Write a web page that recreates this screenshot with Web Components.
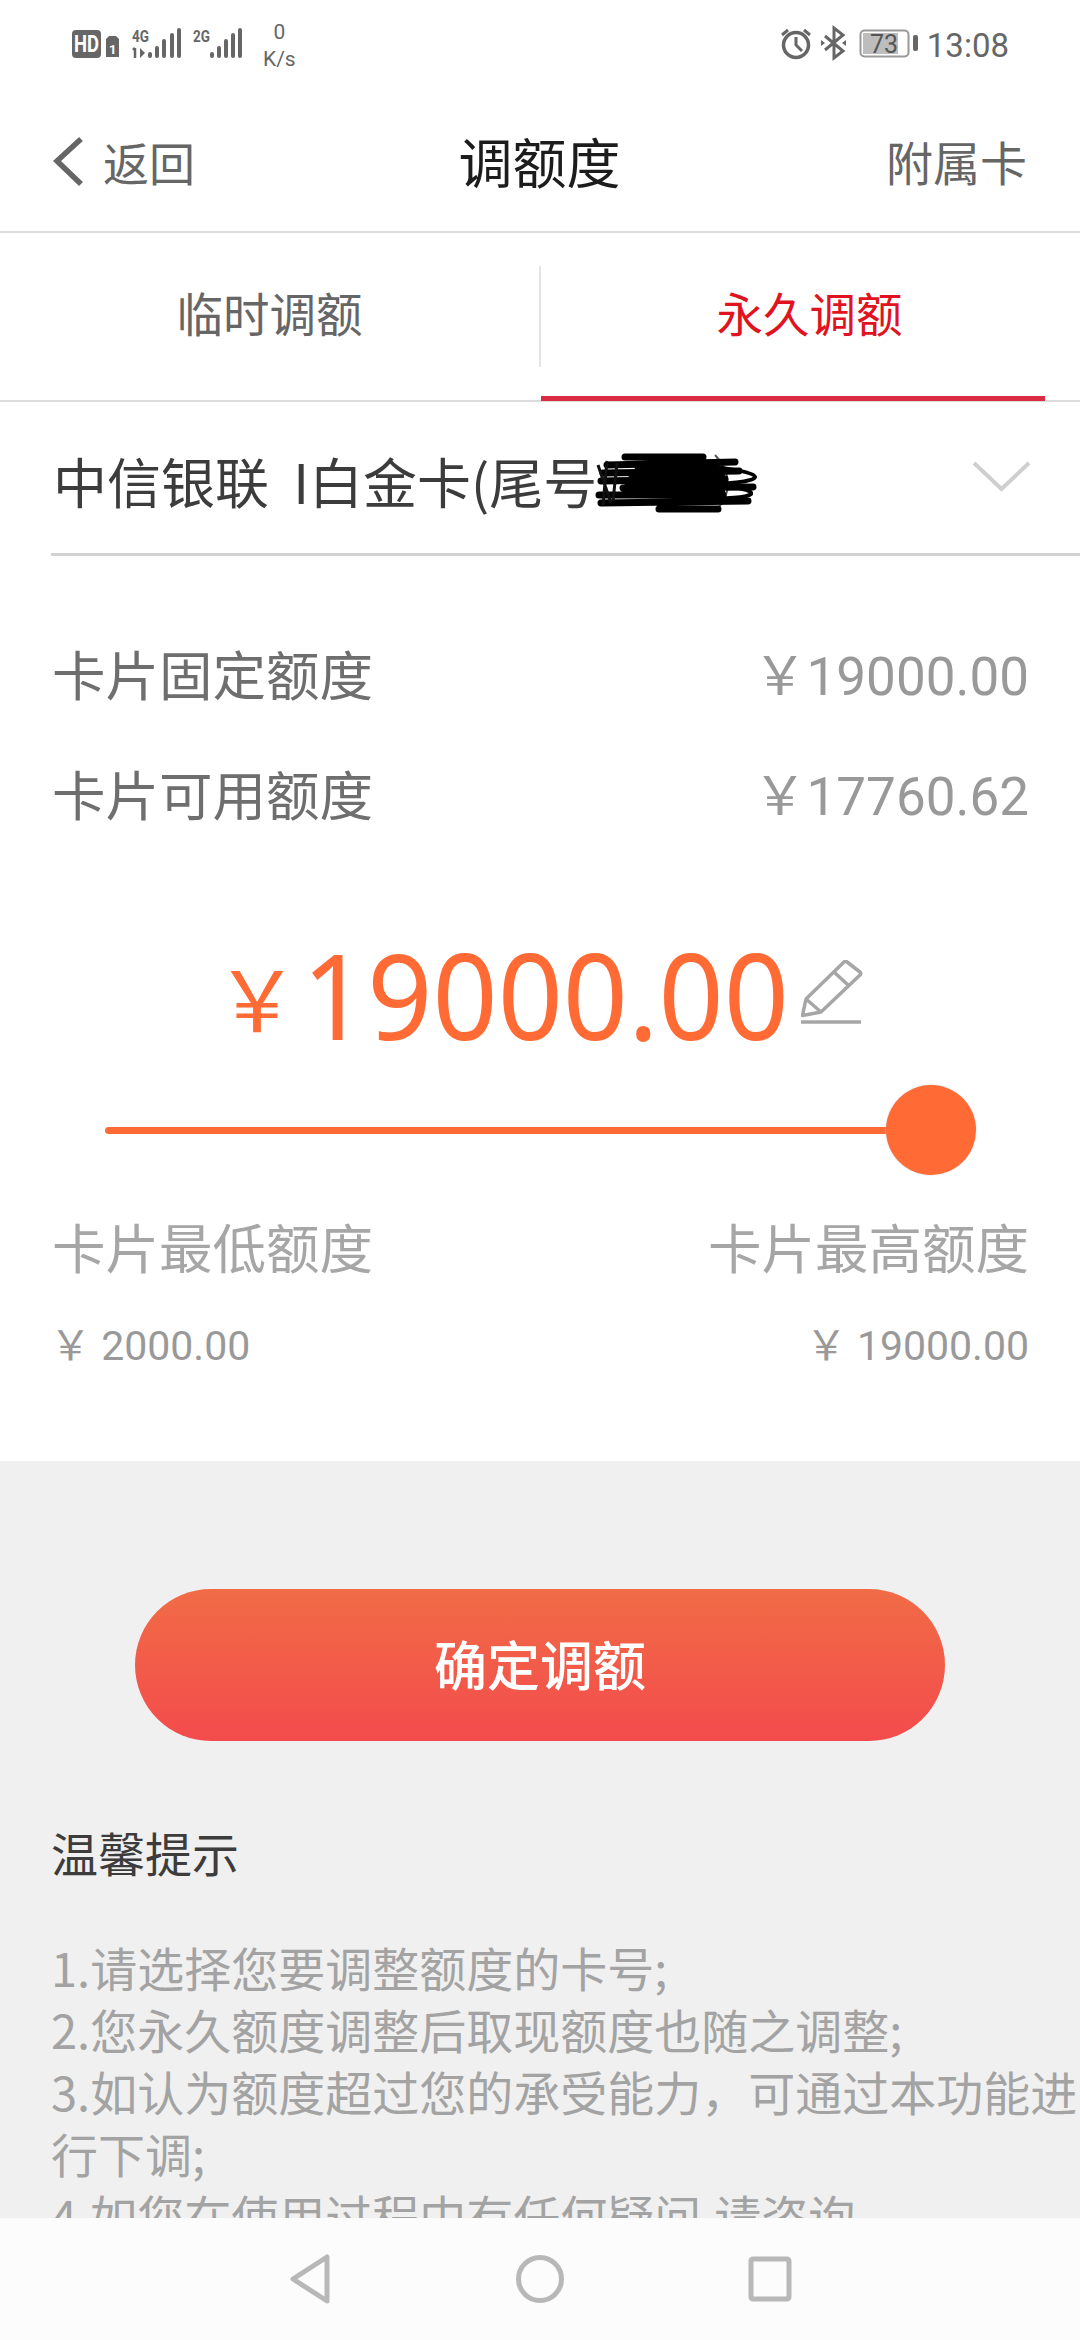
<!DOCTYPE html>
<html lang="zh">
<head>
<meta charset="utf-8">
<style>
  html, body { margin: 0; padding: 0; }
  body {
    width: 1080px; height: 2340px; overflow: hidden; background: #fff;
    font-family: "Noto Sans CJK SC", Roboto, sans-serif;
    display: flex; flex-direction: column;
  }
</style>
</head>
<body>
<status-bar></status-bar>
<nav-bar></nav-bar>
<tab-bar></tab-bar>
<card-select></card-select>
<info-row label="卡片固定额度" value="￥19000.00" style="margin-top:56px"></info-row>
<info-row label="卡片可用额度" value="￥17760.62"></info-row>
<amount-slider></amount-slider>
<limit-row></limit-row>
<tips-panel>
  <span slot="btn">确定调额</span>
</tips-panel>
<soft-keys></soft-keys>

<script>
class StatusBar extends HTMLElement {
  constructor() { super(); this.attachShadow({ mode: 'open' }); }
  connectedCallback() {
    this.shadowRoot.innerHTML = `
    <style>
      :host { display: flex; height: 88px; box-sizing: border-box; padding: 0 71px 0 70px; align-items: center; justify-content: space-between; color: #666; flex: none; }
      .l, .r { display: flex; align-items: center; }
      svg { display: block; }
      .speed { font: 21px/27px Roboto, sans-serif; text-align: center; margin: 4px 0 0 13px; color: #666; }
      .time { font: 33px Roboto, sans-serif; margin-left: 7px; margin-top: 3px; }
      .small { font: 700 16px Roboto, sans-serif; fill: #666; }
      .hd { font: 700 23px Roboto, sans-serif; fill: #fff; }
      .sim { font: 700 13px Roboto, sans-serif; fill: #fff; }
      .num { font: 25px Roboto, sans-serif; fill: #555; }
    </style>
    <div class="l">
      <svg width="180" height="40" viewBox="70 26 180 40">
        <rect x="72" y="32" width="29" height="28" rx="4" fill="#666"/>
        <text class="hd" x="74" y="54" textLength="25" lengthAdjust="spacingAndGlyphs">HD</text>
        <path d="M106 41l3-3h7l3 3v18h-13z" fill="#666"/>
        <text class="sim" x="109" y="56">1</text>
        <text class="small" x="132" y="44" textLength="17" lengthAdjust="spacingAndGlyphs">4G</text>
        <path d="M135 50v10M133 52l2-2" stroke="#666" stroke-width="2.5" fill="none"/>
        <path d="M140 50v10l5-5z" fill="#666"/>
        <g stroke="#666" stroke-width="4" stroke-linecap="round" fill="none">
          <path d="M150 56v2M157 50v8M164 43v15M172 37v21M179 32v26"/>
          <path d="M212 56v2M219 50v8M226 43v15M233 37v21M240 32v26"/>
        </g>
        <text class="small" x="193" y="44" textLength="17" lengthAdjust="spacingAndGlyphs">2G</text>
      </svg>
      <div class="speed">0<br>K/s</div>
    </div>
    <div class="r">
      <svg width="142" height="40" viewBox="777 26 142 40">
        <circle cx="795" cy="47" r="12.5" fill="none" stroke="#666" stroke-width="3.5"/>
        <path d="M795 39v8l6 6" fill="none" stroke="#666" stroke-width="3"/>
        <path d="M781 37l6-5M809 37l-6-5" stroke="#666" stroke-width="3"/>
        <path d="M824 38l18 15-9 7V30l9 7-18 15" fill="none" stroke="#666" stroke-width="3"/>
        <path d="M820 42v6l4-3zM845 42v6l-4-3z" fill="#666"/>
        <rect x="859.500" y="32.500" width="48" height="26" rx="4" fill="#fff" stroke="#999" stroke-width="2"/>
        <rect x="862" y="35" width="35" height="21" fill="#bdbdbd"/>
        <rect x="912" y="37" width="5" height="16" rx="2" fill="#666"/>
        <text class="num" x="869" y="55">73</text>
      </svg>
      <span class="time">13:08</span>
    </div>`;
  }
}
customElements.define('status-bar', StatusBar);

class NavBar extends HTMLElement {
  constructor() { super(); this.attachShadow({ mode: 'open' }); }
  connectedCallback() {
    this.shadowRoot.innerHTML = `
    <style>
      :host { display: grid; grid-template-columns: 1fr auto 1fr; flex: none; height: 145px; box-sizing: border-box; padding: 2px 53px 0 52px; align-items: center; border-bottom: 2px solid #dcdcdc; }
      .back { display: flex; align-items: center; font-size: 46px; color: #666; }
      svg { margin-right: 20px; }
      .title { font-size: 54px; color: #1c1c1c; }
      .more { font-size: 47px; color: #666; justify-self: end; }
    </style>
    <div class="back"><svg width="31" height="50" viewBox="0 0 31 50"><path d="M29 3L5 25l24 23" fill="none" stroke="#666" stroke-width="5.500"/></svg>返回</div>
    <div class="title">调额度</div>
    <div class="more">附属卡</div>`;
  }
}
customElements.define('nav-bar', NavBar);

class TabBar extends HTMLElement {
  constructor() { super(); this.attachShadow({ mode: 'open' }); }
  connectedCallback() {
    this.shadowRoot.innerHTML = `
    <style>
      :host { display: grid; flex: none; grid-template-columns: 539px 541px; height: 169px; box-sizing: border-box; border-bottom: 2px solid #dcdcdc; font-size: 46.500px; }
      .tab { display: flex; align-items: center; justify-content: center; color: #666; position: relative; padding-bottom: 11px; }
      .tab.on { color: #df1420; }
      .on::before { content: ""; position: absolute; left: 0; top: 33px; height: 101px; width: 2px; background: #e4e4e4; }
      .on::after { content: ""; position: absolute; left: 2px; width: 504px; bottom: -1px; height: 5px; background: #d92b42; }
    </style>
    <div class="tab">临时调额</div>
    <div class="tab on">永久调额</div>`;
  }
}
customElements.define('tab-bar', TabBar);

class CardSelect extends HTMLElement {
  constructor() { super(); this.attachShadow({ mode: 'open' }); }
  connectedCallback() {
    this.shadowRoot.innerHTML = `
    <style>
      :host { display: flex; flex: none; height: 154px; margin-left: 51px; box-sizing: border-box; border-bottom: 3px solid #d2d2d2; align-items: center; font-size: 54px; color: #3c3c3c; padding: 6px 49px 0 2px; position: relative; }
      .name { white-space: pre; flex: 1; }
      .scrib { position: absolute; left: 542px; top: 49px; }
      .arrow { display: block; margin-top: -10px; }
    </style>
    <span class="name">中信银联  I白金卡(尾号</span>
    <svg class="scrib" width="166" height="62" viewBox="0 0 166 62">
      <path d="M122 4c16 16 18 40 0 56" fill="none" stroke="#555" stroke-width="2"/>
      <path d="M32 6H110M14 14L142 11M10 22L146 20M8 30L132 28M30 37L160 36M6 44L130 44M8 52L155 50M66 58H125" fill="none" stroke="#000" stroke-width="7" stroke-linecap="round"/>
      <path d="M46 16H122M40 26H128M36 34H126M34 42H128" fill="none" stroke="#000" stroke-width="9" stroke-linecap="round"/>
      <path d="M5 14L18 52M14 10L10 54M24 12L20 50" fill="none" stroke="#111" stroke-width="3"/>
      <path d="M100 14c36 3 62 7 62 12s-30 7-60 8c36 1 58 4 56 9-4 4-30 5-56 5" fill="none" stroke="#000" stroke-width="4"/>
    </svg>
    <svg class="arrow" width="59" height="32" viewBox="0 0 59 32"><path d="M2 3l27.500 26L57 3" fill="none" stroke="#cfcfcf" stroke-width="4"/></svg>`;
  }
}
customElements.define('card-select', CardSelect);

class InfoRow extends HTMLElement {
  constructor() { super(); this.attachShadow({ mode: 'open' }); }
  connectedCallback() {
    this.shadowRoot.innerHTML = `
    <style>
      :host { display: flex; flex: none; height: 120px; padding: 0 51px 0 52px; align-items: center; justify-content: space-between; font-size: 53.500px; color: #6e6e6e; }
      .v { color: #999; font: 53px Roboto, "Noto Sans CJK SC", sans-serif; }
    </style>
    <span>${this.getAttribute('label')}</span><span class="v">${this.getAttribute('value')}</span>`;
  }
}
customElements.define('info-row', InfoRow);

class AmountSlider extends HTMLElement {
  constructor() { super(); this.attachShadow({ mode: 'open' }); }
  connectedCallback() {
    this.shadowRoot.innerHTML = `
    <style>
      :host { display: block; flex: none; height: 216px; margin-top: 66px; }
      .amt { display: flex; align-items: center; height: 152px; color: #ff6a35; font: 114px/150px "Noto Sans", sans-serif; padding-left: 215px; }
      .cur { font: 84px/150px "Noto Sans CJK SC", sans-serif; margin: 4px 3px 0 0; }
      .num { display: inline-block; transform: scaleY(1.05); }
      .pen { margin: -2px 0 0 12px; display: block; }
      .track { height: 7px; background: #ff6a35; margin: 57px 0 0 105px; width: 790px; border-radius: 4px; position: relative; }
      .thumb { position: absolute; left: 781px; top: -42px; width: 90px; height: 90px; border-radius: 50%; background: #ff6a35; box-shadow: 0 0 2px #ccc; }
    </style>
    <div class="amt"><span class="cur">￥</span><span class="num">19000.00</span>
      <svg class="pen" width="62" height="66" viewBox="0 0 62 66">
        <path d="M0 62h60" stroke="#a6a6a6" stroke-width="3.500"/>
        <path d="M1.500 55.500L5 39 43 2c1-1 2-1 3 0l13 10c1 1 1 2 0 3L20 52zM5 39l15 13M33 12l14 13" fill="none" stroke="#a6a6a6" stroke-width="3.500" stroke-linejoin="round"/>
      </svg>
    </div>
    <div class="track"><div class="thumb"></div></div>`;
  }
}
customElements.define('amount-slider', AmountSlider);

class LimitRow extends HTMLElement {
  constructor() { super(); this.attachShadow({ mode: 'open' }); }
  connectedCallback() {
    this.shadowRoot.innerHTML = `
    <style>
      :host { display: grid; flex: none; grid-template-columns: 1fr 1fr; height: 327px; box-sizing: border-box; padding: 73px 51px 0 52px; font-size: 53.500px; color: #a6a6a6; align-content: start; row-gap: 32px; }
      .r { text-align: right; }
      .n { font: 41px/60px Roboto, "Noto Sans CJK SC", sans-serif; color: #999; }
      .n:not(.r) { margin-left: -2px; }
    </style>
    <div>卡片最低额度</div><div class="r">卡片最高额度</div>
    <div class="n">￥ 2000.00</div><div class="n r">￥ 19000.00</div>`;
  }
}
customElements.define('limit-row', LimitRow);

class TipsPanel extends HTMLElement {
  constructor() { super(); this.attachShadow({ mode: 'open' }); }
  connectedCallback() {
    this.shadowRoot.innerHTML = `
    <style>
      :host { display: block; flex: 1; min-height: 0; overflow: hidden; background: #f0f0f0; padding: 128px 0 0 51px; }
      .btn { width: 810px; height: 152px; margin-left: 84px; border-radius: 76px; background: linear-gradient(#f16c46, #f34b4c); color: #fff; font-size: 53px; font-weight: 500; display: flex; align-items: center; justify-content: center; box-sizing: border-box; padding-bottom: 4px; }
      h3 { margin: 81px 0 0; font-weight: 400; font-size: 47px; line-height: 60px; color: #3c3c3c; }
      .list { margin-top: 54px; font-size: 47px; line-height: 62px; color: #a3a3a3; width: 1030px; }
    </style>
    <div class="btn"><slot name="btn"></slot></div>
    <h3>温馨提示</h3>
    <div class="list">
      1.请选择您要调整额度的卡号;<br>
      2.您永久额度调整后取现额度也随之调整;<br>
      3.如认为额度超过您的承受能力，可通过本功能进行下调;<br>
      4.如您在使用过程中有任何疑问,请咨询
    </div>`;
  }
}
customElements.define('tips-panel', TipsPanel);

class SoftKeys extends HTMLElement {
  constructor() { super(); this.attachShadow({ mode: 'open' }); }
  connectedCallback() {
    this.shadowRoot.innerHTML = `
    <style>
      :host { display: flex; flex: none; height: 122px; background: #fcfcfc; align-items: center; justify-content: center; }
      .k { width: 230px; display: flex; justify-content: center; }
      .k:first-child { padding-right: 4px; width: 226px; }
      svg { display: block; }
    </style>
    <div class="k"><svg width="42" height="50" viewBox="0 0 42 50"><path d="M38 3v44L4 25z" fill="none" stroke="#b8b8b8" stroke-width="5" stroke-linejoin="round"/></svg></div>
    <div class="k"><svg width="50" height="50" viewBox="0 0 50 50"><circle cx="25" cy="25" r="21.500" fill="none" stroke="#b8b8b8" stroke-width="5"/></svg></div>
    <div class="k"><svg width="44" height="46" viewBox="0 0 44 46"><rect x="3" y="3" width="38" height="40" rx="2" fill="none" stroke="#b8b8b8" stroke-width="5"/></svg></div>`;
  }
}
customElements.define('soft-keys', SoftKeys);
</script>
</body>
</html>
